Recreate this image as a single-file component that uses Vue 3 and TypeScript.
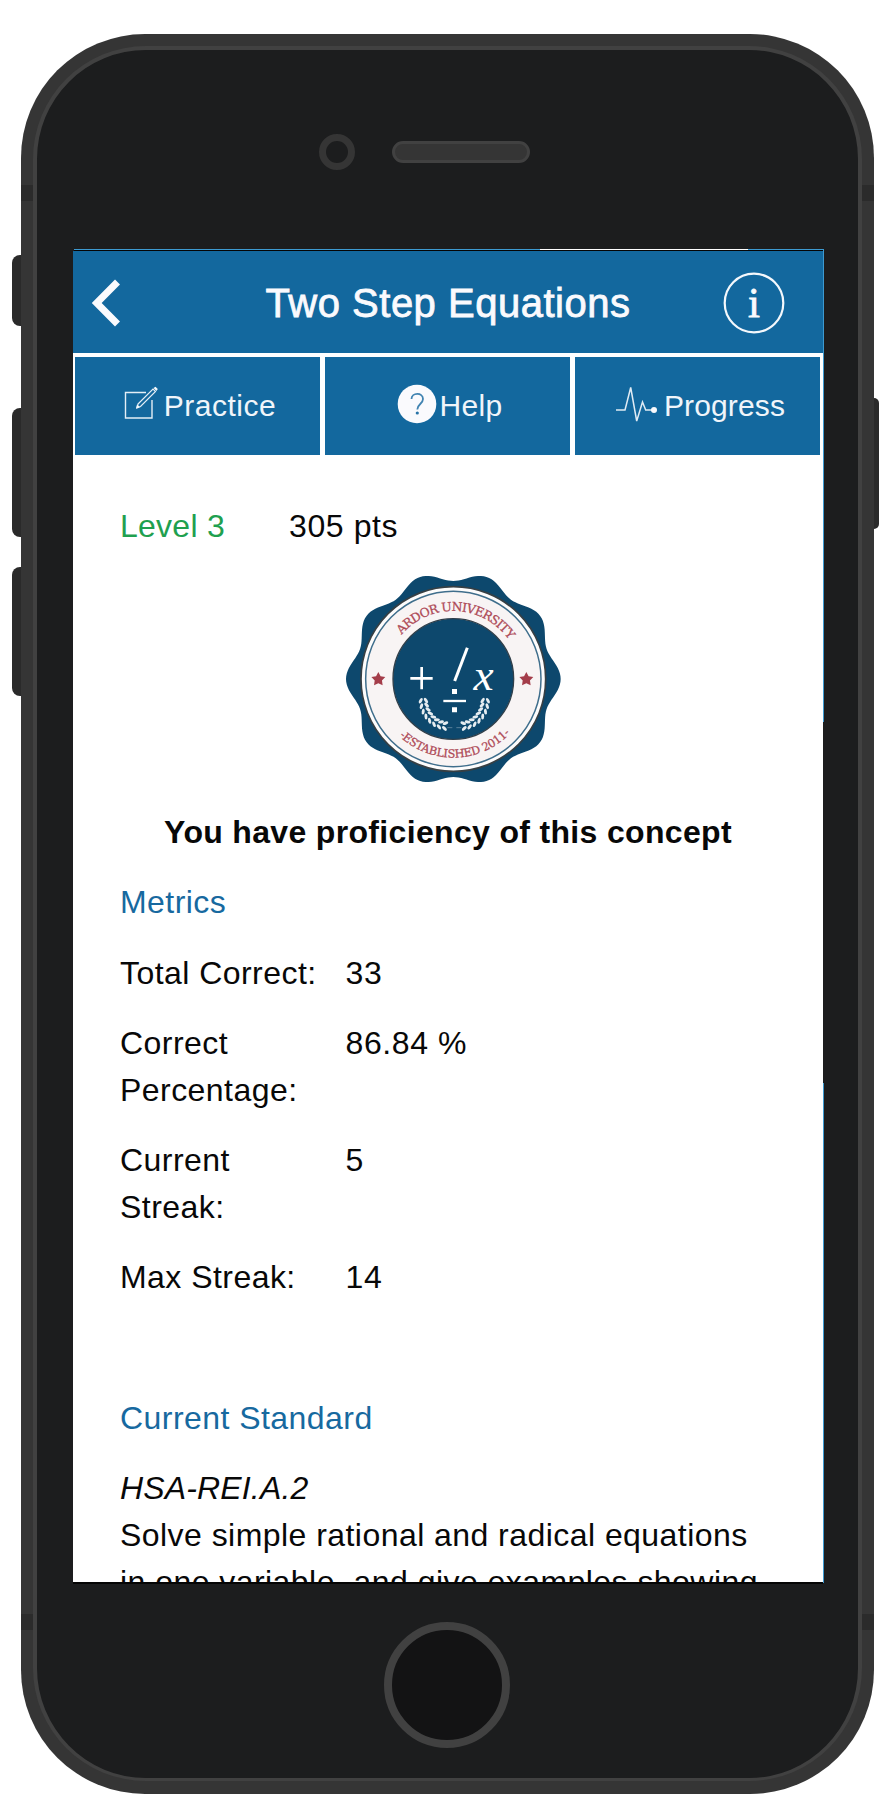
<script setup lang="ts">
interface Metric {
  label: string
  value: string
}

interface Leaf {
  x: number
  y: number
  angle: number
}

const metrics: Metric[] = [
  { label: 'Total Correct:', value: '33' },
  { label: 'Correct Percentage:', value: '86.84 %' },
  { label: 'Current Streak:', value: '5' },
  { label: 'Max Streak:', value: '14' },
]

const cx = 355
const cy = 342

// Scalloped outline of the seal: ten lobes around the centre.
const sealOutline = Array.from({ length: 240 }, (_, i) => {
  const t = (i / 240) * Math.PI * 2
  const r = 308 + 14 * Math.cos(10 * t)
  return `${(cx + r * Math.cos(t)).toFixed(1)},${(cy + r * Math.sin(t)).toFixed(1)}`
}).join(' ')

function starPoints(x: number, y: number): string {
  return Array.from({ length: 10 }, (_, i) => {
    const r = i % 2 === 0 ? 22 : 11.5
    const t = -Math.PI / 2 + (i * Math.PI) / 5
    return `${(x + r * Math.cos(t)).toFixed(1)},${(y + r * Math.sin(t)).toFixed(1)}`
  }).join(' ')
}

// Leaves of the left laurel branch; the right one is its mirror image.
const leaves: Leaf[] = []
for (let i = 0; i < 8; i++) {
  const deg = 178 - i * 11
  const t = (deg * Math.PI) / 180
  for (const side of [-1, 1]) {
    const offset = side * 8
    leaves.push({
      x: 345 + (80 + offset) * Math.cos(t),
      y: 404 + (80 + offset) * Math.sin(t),
      angle: deg + side * 32,
    })
  }
}
</script>

<template>
  <div class="stage">
    <div class="phone">
      <i class="side silent"></i>
      <i class="side vol-up"></i>
      <i class="side vol-down"></i>
      <i class="side power"></i>
      <i class="band top"></i>
      <i class="band bottom"></i>
      <div class="face">
        <i class="camera"></i>
        <i class="speaker"></i>
        <i class="edge edge-top"></i>
        <i class="edge edge-glint"></i>
        <i class="edge edge-right-a"></i>
        <i class="edge edge-right-b"></i>
        <main class="screen">
          <header class="bar">
            <svg class="back" width="34" height="52" viewBox="0 0 34 52">
              <path d="M28.5 5 L7.7 26 L28.5 47" fill="none" stroke="#fafafd" stroke-width="7" />
            </svg>
            <h1>Two Step Equations</h1>
            <svg class="info" width="64" height="64" viewBox="0 0 64 64">
              <circle cx="32" cy="32" r="29.3" fill="none" stroke="#f4f8fc" stroke-width="2.2" />
              <text x="32" y="46" text-anchor="middle">i</text>
            </svg>
          </header>
          <nav class="tabs">
            <a class="tab practice">
              <svg width="36" height="36" viewBox="0 0 36 36">
                <path d="M22 6.500 H1.500 V32 H28 V14" fill="none" stroke="#e4eef6" stroke-width="1.4" />
                <path d="M14 18 L29 3 L31.500 5.500 L16.500 20.500 L13 22 Z" fill="none" stroke="#e4eef6" stroke-width="1.2" />
                <path d="M29.500 2 L31.500 .8 L33.800 3 L32.500 5 Z M13 18.500 L16 21 L12 22.500 Z" fill="#f4f8fc" />
              </svg>
              <span>Practice</span>
            </a>
            <a class="tab help">
              <svg width="40" height="40" viewBox="0 0 40 40">
                <circle cx="20" cy="20" r="19.300" fill="#fafafd" />
                <path d="M14.500 15 C14.500 8.500 26 8 26 15 C26 20 20.300 20 20.300 25.500" fill="none" stroke="#4083b1" stroke-width="1.8" />
                <circle cx="20.300" cy="29" r="1.600" fill="#2873a7" />
              </svg>
              <span>Help</span>
            </a>
            <a class="tab progress">
              <svg width="42" height="40" viewBox="0 0 42 40">
                <path d="M0 26 H9 L14.700 3.500 L20.700 37 L26.500 18 L29.700 26 H38" fill="none" stroke="#e0ebf4" stroke-width="1.500" />
                <circle cx="38" cy="26" r="3" fill="#fafafd" />
              </svg>
              <span>Progress</span>
            </a>
          </nav>
          <section class="content">
            <p class="score"><span class="level">Level 3</span><span class="points">305 pts</span></p>
            <svg class="seal" width="240" height="225" viewBox="0 0 720 675">
              <defs>
                <path id="arc-top" d="M151 342 A204 204 0 0 1 559 342" />
                <path id="arc-bottom" d="M119 342 A236 236 0 0 0 591 342" />
              </defs>
              <polygon :points="sealOutline" fill="#0d486d" />
              <circle :cx="cx" :cy="cy" r="277" fill="#fdfcfc" stroke="#363f44" stroke-width="5" />
              <circle :cx="cx" :cy="cy" r="263" fill="#f8f4f4" stroke="#3f6e8c" stroke-width="4.500" />
              <circle :cx="cx" :cy="cy" r="181" fill="#0d486d" stroke="#303f4a" stroke-width="4" />
              <text class="motto" font-size="37">
                <textPath href="#arc-top" startOffset="51.5%" text-anchor="middle" textLength="372">ARDOR UNIVERSITY</textPath>
              </text>
              <text class="motto" font-size="34">
                <textPath href="#arc-bottom" startOffset="50.800%" text-anchor="middle" textLength="370">-ESTABLISHED 2011-</textPath>
              </text>
              <polygon :points="starPoints(130, 343)" fill="#a43d4a" />
              <polygon :points="starPoints(574, 343)" fill="#a43d4a" />
              <g stroke="#fff" fill="none">
                <path d="M226 340 H293 M260 306 V373" stroke-width="8" />
                <path d="M397 248 L359 348" stroke-width="9" />
                <path d="M325 408 H393" stroke-width="7" />
              </g>
              <path d="M351 372 h15 v15 h-15 Z M351 427 h15 v15 h-15 Z" fill="#fff" />
              <text class="unknown" x="446" y="376" text-anchor="middle">x</text>
              <g v-for="side in 2" :key="side" :transform="side === 2 ? 'matrix(-1 0 0 1 716 0)' : undefined">
                <ellipse
                  v-for="(leaf, i) in leaves"
                  :key="i"
                  :transform="`translate(${leaf.x.toFixed(1)} ${leaf.y.toFixed(1)}) rotate(${leaf.angle.toFixed(1)})`"
                  rx="4.500"
                  ry="9"
                  fill="#e6edf1"
                />
                <path d="M337 488 H352" stroke="#7d9cb0" stroke-width="2" />
              </g>
            </svg>
            <h2>You have proficiency of this concept</h2>
            <h3>Metrics</h3>
            <dl v-for="metric in metrics" :key="metric.label">
              <dt>{{ metric.label }}</dt>
              <dd>{{ metric.value }}</dd>
            </dl>
            <h3 class="standard">Current Standard</h3>
            <p class="description"><em>HSA-REI.A.2</em><br />Solve simple rational and radical equations<br />in one variable, and give examples showing</p>
          </section>
        </main>
        <i class="home"></i>
      </div>
    </div>
  </div>
</template>

<style>
html,
body {
  background: #fff;
  overflow: hidden;
}
</style>

<style scoped>
.stage {
  box-sizing: border-box;
  width: 886px;
  height: 1814px;
  padding: 34px 12px 20px 21px;
  overflow: hidden;
  font-family: 'Liberation Sans', Arial, sans-serif;
}
.phone {
  position: relative;
  box-sizing: border-box;
  width: 853px;
  height: 1760px;
  padding: 12px 12px 13px;
  border-radius: 124px;
  background: #353535;
}
.face {
  position: relative;
  box-sizing: border-box;
  height: 100%;
  border: 4px solid #414141;
  border-bottom-width: 3px;
  border-radius: 113px;
  background: #1c1d1e;
  padding: 201px 35px 0 36px;
}
.side {
  position: absolute;
  left: -9px;
  width: 9px;
  height: 129px;
  border-radius: 8px 0 0 8px;
  background: #2a2a2a;
}
.silent { top: 221px; height: 71px; }
.vol-up { top: 374px; }
.vol-down { top: 533px; }
.power {
  top: 364px;
  left: 853px;
  width: 5px;
  height: 131px;
  border-radius: 0 5px 5px 0;
}
.band {
  position: absolute;
  left: 0;
  width: 100%;
  height: 16px;
  background: #2b2b2b;
}
.band.top { top: 151px; }
.band.bottom { top: 1580px; }
.camera {
  position: absolute;
  box-sizing: border-box;
  left: 282px;
  top: 84px;
  width: 36px;
  height: 36px;
  border: 7px solid #353535;
  border-radius: 50%;
}
.speaker {
  position: absolute;
  box-sizing: border-box;
  left: 355px;
  top: 91px;
  width: 138px;
  height: 22px;
  border: 3px solid #414141;
  border-radius: 11px;
  background: #353535;
}
.edge {
  position: absolute;
  background: #3d9ad1;
}
.edge-top { left: 37px; top: 199px; width: 750px; height: 1px; box-shadow: 0 1px #050505; }
.edge-glint { left: 503px; top: 199px; width: 208px; height: 1px; background: #fff; }
.edge-right-a { left: 786px; top: 199px; width: 1px; height: 473px; }
.edge-right-b { left: 786px; top: 1033px; width: 1px; height: 500px; }
.screen {
  width: 750px;
  height: 1331px;
  overflow: hidden;
  background: #fff;
  box-shadow: 0 2px #050505;
}
.bar {
  box-sizing: border-box;
  display: flex;
  align-items: center;
  height: 102px;
  padding: 1px 37px 0 16px;
  background: #13689e;
  color: #fafafd;
}
.bar h1 {
  flex: 1;
  margin: 0;
  padding: 1px 0 0 51px;
  font-size: 40px;
  line-height: 46px;
  font-weight: 400;
  letter-spacing: 0.5px;
  text-align: center;
  white-space: nowrap;
  -webkit-text-stroke: 0.8px #fafafd;
}
.info text {
  font: 400 43px 'Liberation Serif', serif;
  fill: #fafafd;
  stroke: #fafafd;
  stroke-width: 0.8px;
}
.tabs {
  display: grid;
  grid-template-columns: repeat(3, 245px);
  gap: 5px;
  padding: 4px 2px 0;
}
.tab {
  display: flex;
  align-items: center;
  justify-content: center;
  box-sizing: border-box;
  height: 98px;
  background: #13689e;
  color: #f0f5fa;
  font-size: 30px;
  line-height: 34px;
}
.practice { gap: 4px; padding-left: 5px; letter-spacing: 0.5px; }
.help { gap: 3px; padding-left: 4px; letter-spacing: 0.3px; }
.progress { gap: 6px; padding-left: 6px; letter-spacing: 0.15px; }
.practice svg,
.progress svg { margin-top: -5px; }
.help svg { margin-top: -4px; }
.content {
  padding: 48px 47px 0;
  font-size: 32px;
  line-height: 46.9px;
  letter-spacing: 0.45px;
  color: #080808;
}
.score {
  display: flex;
  margin: 0;
}
.level {
  width: 169px;
  color: #1fa04f;
  letter-spacing: 0.25px;
}
.points { letter-spacing: 0.6px; }
.seal {
  display: block;
  margin: 15px 0 19px 215px;
}
.motto {
  font-family: 'DejaVu Serif', serif;
  fill: #ae4a57;
  stroke: #ae4a57;
  stroke-width: 0.8px;
}
.unknown {
  font: italic 136px 'Liberation Serif', serif;
  letter-spacing: 0;
  fill: #fff;
}
h2 {
  margin: 0;
  font-size: 32px;
  font-weight: 700;
  letter-spacing: 0.33px;
  text-align: center;
}
h3 {
  margin: 23.4px 0 0;
  font-size: 32px;
  font-weight: 400;
  color: #17699f;
}
dl {
  display: flex;
  margin: 23.4px 0 0;
}
dt {
  box-sizing: border-box;
  width: 225.5px;
  padding-right: 25px;
}
dd { margin: 0; letter-spacing: 0.6px; }
.standard { margin-top: 93.6px; }
.description {
  margin: 23.4px 0 0;
  white-space: nowrap;
}
.description em { letter-spacing: 0.15px; }
.home {
  position: absolute;
  box-sizing: border-box;
  left: 347px;
  top: 1572px;
  width: 126px;
  height: 126px;
  border: 8px solid #414141;
  border-radius: 50%;
  background: #131314;
}
</style>
